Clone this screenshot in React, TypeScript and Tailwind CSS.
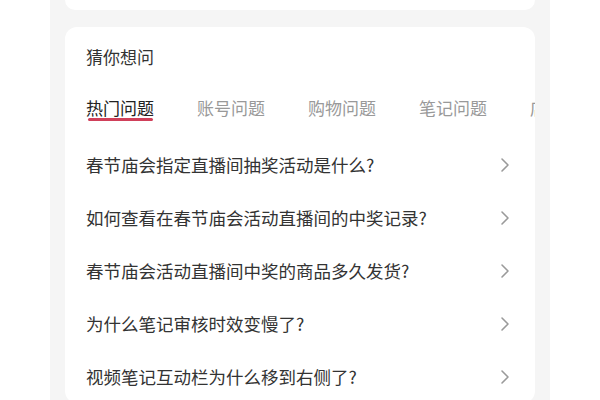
import React from 'react';

const tabs = ['热门问题', '账号问题', '购物问题', '笔记问题', '店铺问题'];

const questions = [
  '春节庙会指定直播间抽奖活动是什么?',
  '如何查看在春节庙会活动直播间的中奖记录?',
  '春节庙会活动直播间中奖的商品多久发货?',
  '为什么笔记审核时效变慢了?',
  '视频笔记互动栏为什么移到右侧了?',
];

const Chevron = () => (
  <svg width="10" height="16" viewBox="0 0 10 16" fill="none" className="shrink-0">
    <path d="M2 2l6 6-6 6" stroke="#9a9a9a" strokeWidth="1.6" strokeLinecap="round" strokeLinejoin="round" />
  </svg>
);

export default function App() {
  return (
    <div
      className="w-[600px] h-[400px] bg-white flex justify-center overflow-hidden"
      style={{ fontFamily: '"Noto Sans CJK SC", "Noto Sans", sans-serif' }}
    >
      <div className="w-[500px] bg-[#f5f5f5] px-[15px]">
        <div className="h-[10px] bg-white rounded-b-[12px]" />
        <div className="mt-[17px] bg-white rounded-[12px] pl-[21px] pr-[25px] pt-[18px] overflow-hidden">
          <div className="text-[17px] leading-[24px] text-[#333]">猜你想问</div>
          <div className="mt-[27px] flex gap-[43px] whitespace-nowrap overflow-hidden -mr-[25px]">
            {tabs.map((t, i) => (
              <div key={t} className="flex flex-col items-center shrink-0">
                <span className={`text-[17px] leading-[24px] ${i === 0 ? 'text-[#222]' : 'text-[#999]'}`}>{t}</span>
                <span className={`-mt-[2px] h-[3px] w-[65px] rounded-full ${i === 0 ? 'bg-[#d0405a]' : 'bg-transparent'}`} />
              </div>
            ))}
          </div>
          <div className="mt-[17px]">
            {questions.map((q) => (
              <div key={q} className="h-[53px] flex items-center justify-between">
                <span className="text-[17.5px] leading-[24px] text-[#333]">{q}</span>
                <Chevron />
              </div>
            ))}
          </div>
        </div>
      </div>
    </div>
  );
}
